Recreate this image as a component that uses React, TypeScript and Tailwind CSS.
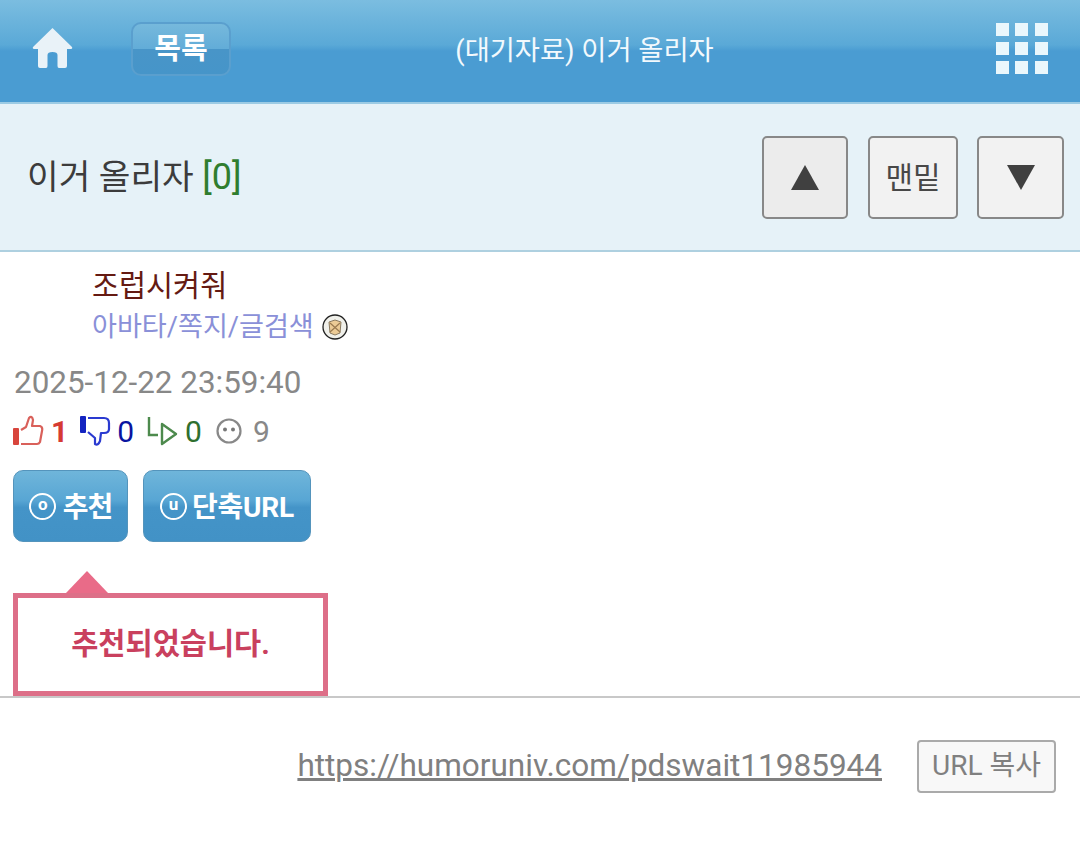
const font = { fontFamily: '"Roboto", "Noto Sans CJK KR", sans-serif' };

const grad = 'bg-[linear-gradient(to_bottom,#7bbde0_0%,#5aa9d7_44%,#4a9cd2_50%,#4a9cd2_100%)]';
const btnGrad = 'bg-[linear-gradient(to_bottom,#6fb5da_0%,#58a6d4_42%,#4494c8_52%,#4292c6_100%)]';

function Home() {
  return (
    <svg width="41" height="42" viewBox="0 0 41 42">
      <path d="M20.5 1 L40 20 Q41 22 38 22 L35 22 L35 39 Q35 41 33 41 L27 41 Q25.500 41 25.500 39 L25.500 28 Q25.500 25 20.500 25 Q15.500 25 15.500 28 L15.500 39 Q15.500 41 14 41 L8 41 Q6 41 6 39 L6 22 L3 22 Q0 22 1 20 Z" fill="#e9f2f8" />
    </svg>
  );
}

function Grid() {
  return (
    <div className="grid grid-cols-3 gap-[6px] w-[52px] mr-[32px]">
      {Array.from({ length: 9 }).map((_, i) => (
        <div key={i} className="w-[13px] h-[13px] bg-[#eaf7fc]" />
      ))}
    </div>
  );
}

function ThumbUp() {
  return (
    <svg width="31" height="32" viewBox="0 0 31 32" fill="none">
      <rect x="0" y="13" width="6" height="17" rx="1" fill="#d8453c" />
      <path d="M8 15 L13 12 L16 3 Q19 0 20 5 L19 11 L27 11 Q30 12 29 16 L27 27 Q26 29 24 29 L8 29" stroke="#d9605a" strokeWidth="2.200" strokeLinejoin="round" />
    </svg>
  );
}

function ThumbDown() {
  return (
    <svg width="31" height="32" viewBox="0 0 31 32" fill="none">
      <rect x="0" y="1" width="6" height="17" rx="1" fill="#1424c0" />
      <path d="M8 3 L24 3 Q29 3 29 8 L29 14 Q29 18 24 18 L21 18 L20 26 Q18 31 15 29 L15 23 L8 17" stroke="#2a3ad0" strokeWidth="2.200" strokeLinejoin="round" />
    </svg>
  );
}

function Share() {
  return (
    <svg width="32" height="32" viewBox="0 0 32 32" fill="none">
      <path d="M2 2 L2 20 L11 20" stroke="#4d8a4d" strokeWidth="2.400" />
      <path d="M15 9 L29 19 L15 29 Z" stroke="#4d8a4d" strokeWidth="2.400" strokeLinejoin="round" />
    </svg>
  );
}

function Smile() {
  return (
    <svg width="26" height="26" viewBox="0 0 26 26" fill="none">
      <circle cx="13" cy="13" r="11.500" stroke="#888" strokeWidth="2.200" />
      <circle cx="9" cy="11.500" r="2" fill="#777" />
      <circle cx="17" cy="11.500" r="2" fill="#777" />
    </svg>
  );
}

function Badge() {
  return (
    <svg width="26" height="26" viewBox="0 0 26 26">
      <circle cx="13" cy="13" r="12" fill="#f0f0ea" stroke="#222" strokeWidth="1.300" />
      <path d="M7 8 L13 6 L19 8 L18 19 L13 21 L8 19 Z" fill="#eccb96" stroke="#8a7a60" strokeWidth="1" />
      <path d="M8 9 L18 18 M18 9 L8 18" stroke="#9a7a50" strokeWidth="1.200" />
    </svg>
  );
}

function Ring({ ch }: { ch: string }) {
  return (
    <span className="w-[27px] h-[27px] rounded-full border-[2px] border-white flex items-center justify-center text-[17px] font-bold leading-none pb-[3px]">
      {ch}
    </span>
  );
}

export default function App() {
  return (
    <div style={font} className="w-[1080px] h-[844px] bg-white overflow-hidden">
      <header className={`h-[104px] ${grad} border-b-2 border-[#9ccbe4] flex items-center`}>
        <div className="ml-[32px] mt-[-7px]">
          <Home />
        </div>
        <div className="ml-[58px] mt-[-4px] w-[100px] h-[54px] rounded-[10px] border-2 border-[#5a9fce] bg-[linear-gradient(to_bottom,#76b9dc_0%,#62acd8_50%,#4895c8_51%,#4695c9_100%)] flex items-center justify-center text-white text-[29px] font-bold pt-[1px]">
          목록
        </div>
        <div className="flex-1 text-center pr-[58px] text-[#f2f9fd] text-[27.300px]">(대기자료) 이거 올리자</div>
        <div className="mt-[-6px]">
          <Grid />
        </div>
      </header>

      <section className="h-[148px] bg-[#e6f2f8] border-b-2 border-[#aed0e0] flex items-center pl-[27px] pr-[16px]">
        <div className="flex-1 text-[34.400px] text-[#3c3c3c]">
          이거 올리자 <span className="text-[36px] text-[#2f7d2f]">[0]</span>
        </div>
        <div className="flex items-center">
          <button className="w-[86px] h-[83px] rounded-[5px] border-2 border-[#888] bg-[#ececec] flex items-center justify-center">
            <svg width="28" height="25" viewBox="0 0 28 25"><path d="M14 0 L28 25 L0 25 Z" fill="#404040" /></svg>
          </button>
          <button className="ml-[20px] w-[90px] h-[83px] rounded-[5px] border-2 border-[#888] bg-[#f2f2f2] text-[30px] text-[#484848]">맨밑</button>
          <button className="ml-[19px] w-[87px] h-[83px] rounded-[5px] border-2 border-[#888] bg-[#f2f2f2] flex items-center justify-center">
            <svg width="28" height="25" viewBox="0 0 28 25"><path d="M0 0 L28 0 L14 25 Z" fill="#404040" /></svg>
          </button>
        </div>
      </section>

      <section className="h-[444px] pt-[17px] pl-[13px]">
        <div className="pl-[79px] text-[29.400px] leading-[35px] text-[#651a12]">조럽시켜줘</div>
        <div className="pl-[79px] mt-[5px] flex items-center gap-[8px] text-[27.100px] leading-[36px] text-[#8a90d8]">
          아바타/쪽지/글검색
          <Badge />
        </div>
        <div className="mt-[18px] pl-[1px] text-[31.400px] leading-[40px] text-[#888]">2025-12-22 23:59:40</div>
        <div className="mt-[8px] flex items-center h-[40px] text-[30px]">
          <ThumbUp />
          <span className="ml-[7px] font-bold text-[#d63a32]">1</span>
          <span className="ml-[12px]"><ThumbDown /></span>
          <span className="ml-[6px] text-[#0a14a0]">0</span>
          <span className="ml-[13px]"><Share /></span>
          <span className="ml-[6px] text-[#2f6f2f]">0</span>
          <span className="ml-[14px]"><Smile /></span>
          <span className="ml-[11px] text-[#888]">9</span>
        </div>
        <div className="mt-[19px] flex gap-[15px] text-white font-bold text-[28px]">
          <button className={`w-[115px] h-[72px] rounded-[10px] border-[1.500px] border-[#5494bc] ${btnGrad} flex items-center justify-center gap-[7px] tracking-[-1px]`}>
            <Ring ch="o" />
            <span className="pt-[3px]">추천</span>
          </button>
          <button className={`w-[168px] h-[72px] rounded-[10px] border-[1.500px] border-[#5494bc] ${btnGrad} flex items-center justify-center gap-[5px] tracking-[-0.200px]`}>
            <Ring ch="u" />
            <span className="pt-[3px]">단축URL</span>
          </button>
        </div>
        <div className="relative mt-[51px] w-[315px] h-[103px] border-[5px] border-[#dd6f88] flex items-center justify-center text-[29.500px] font-bold text-[#c9405e]">
          <svg className="absolute left-[48px] top-[-27px]" width="42" height="22" viewBox="0 0 42 22">
            <path d="M21 0 L42 22 L0 22 Z" fill="#e96b88" />
          </svg>
          추천되었습니다.
        </div>
      </section>

      <div className="h-[2px] bg-[#c8c8c8]" />

      <section className="flex items-center justify-end pr-[24px] pt-[41px]">
        <a className="text-[31.500px] leading-[54px] text-[#808080] underline decoration-[3px]">https://humoruniv.com/pdswait11985944</a>
        <button className="ml-[35px] w-[139px] h-[53px] rounded-[4px] border-2 border-[#aaa] bg-[#f8f8f8] text-[28px] text-[#808080]">URL 복사</button>
      </section>
    </div>
  );
}
